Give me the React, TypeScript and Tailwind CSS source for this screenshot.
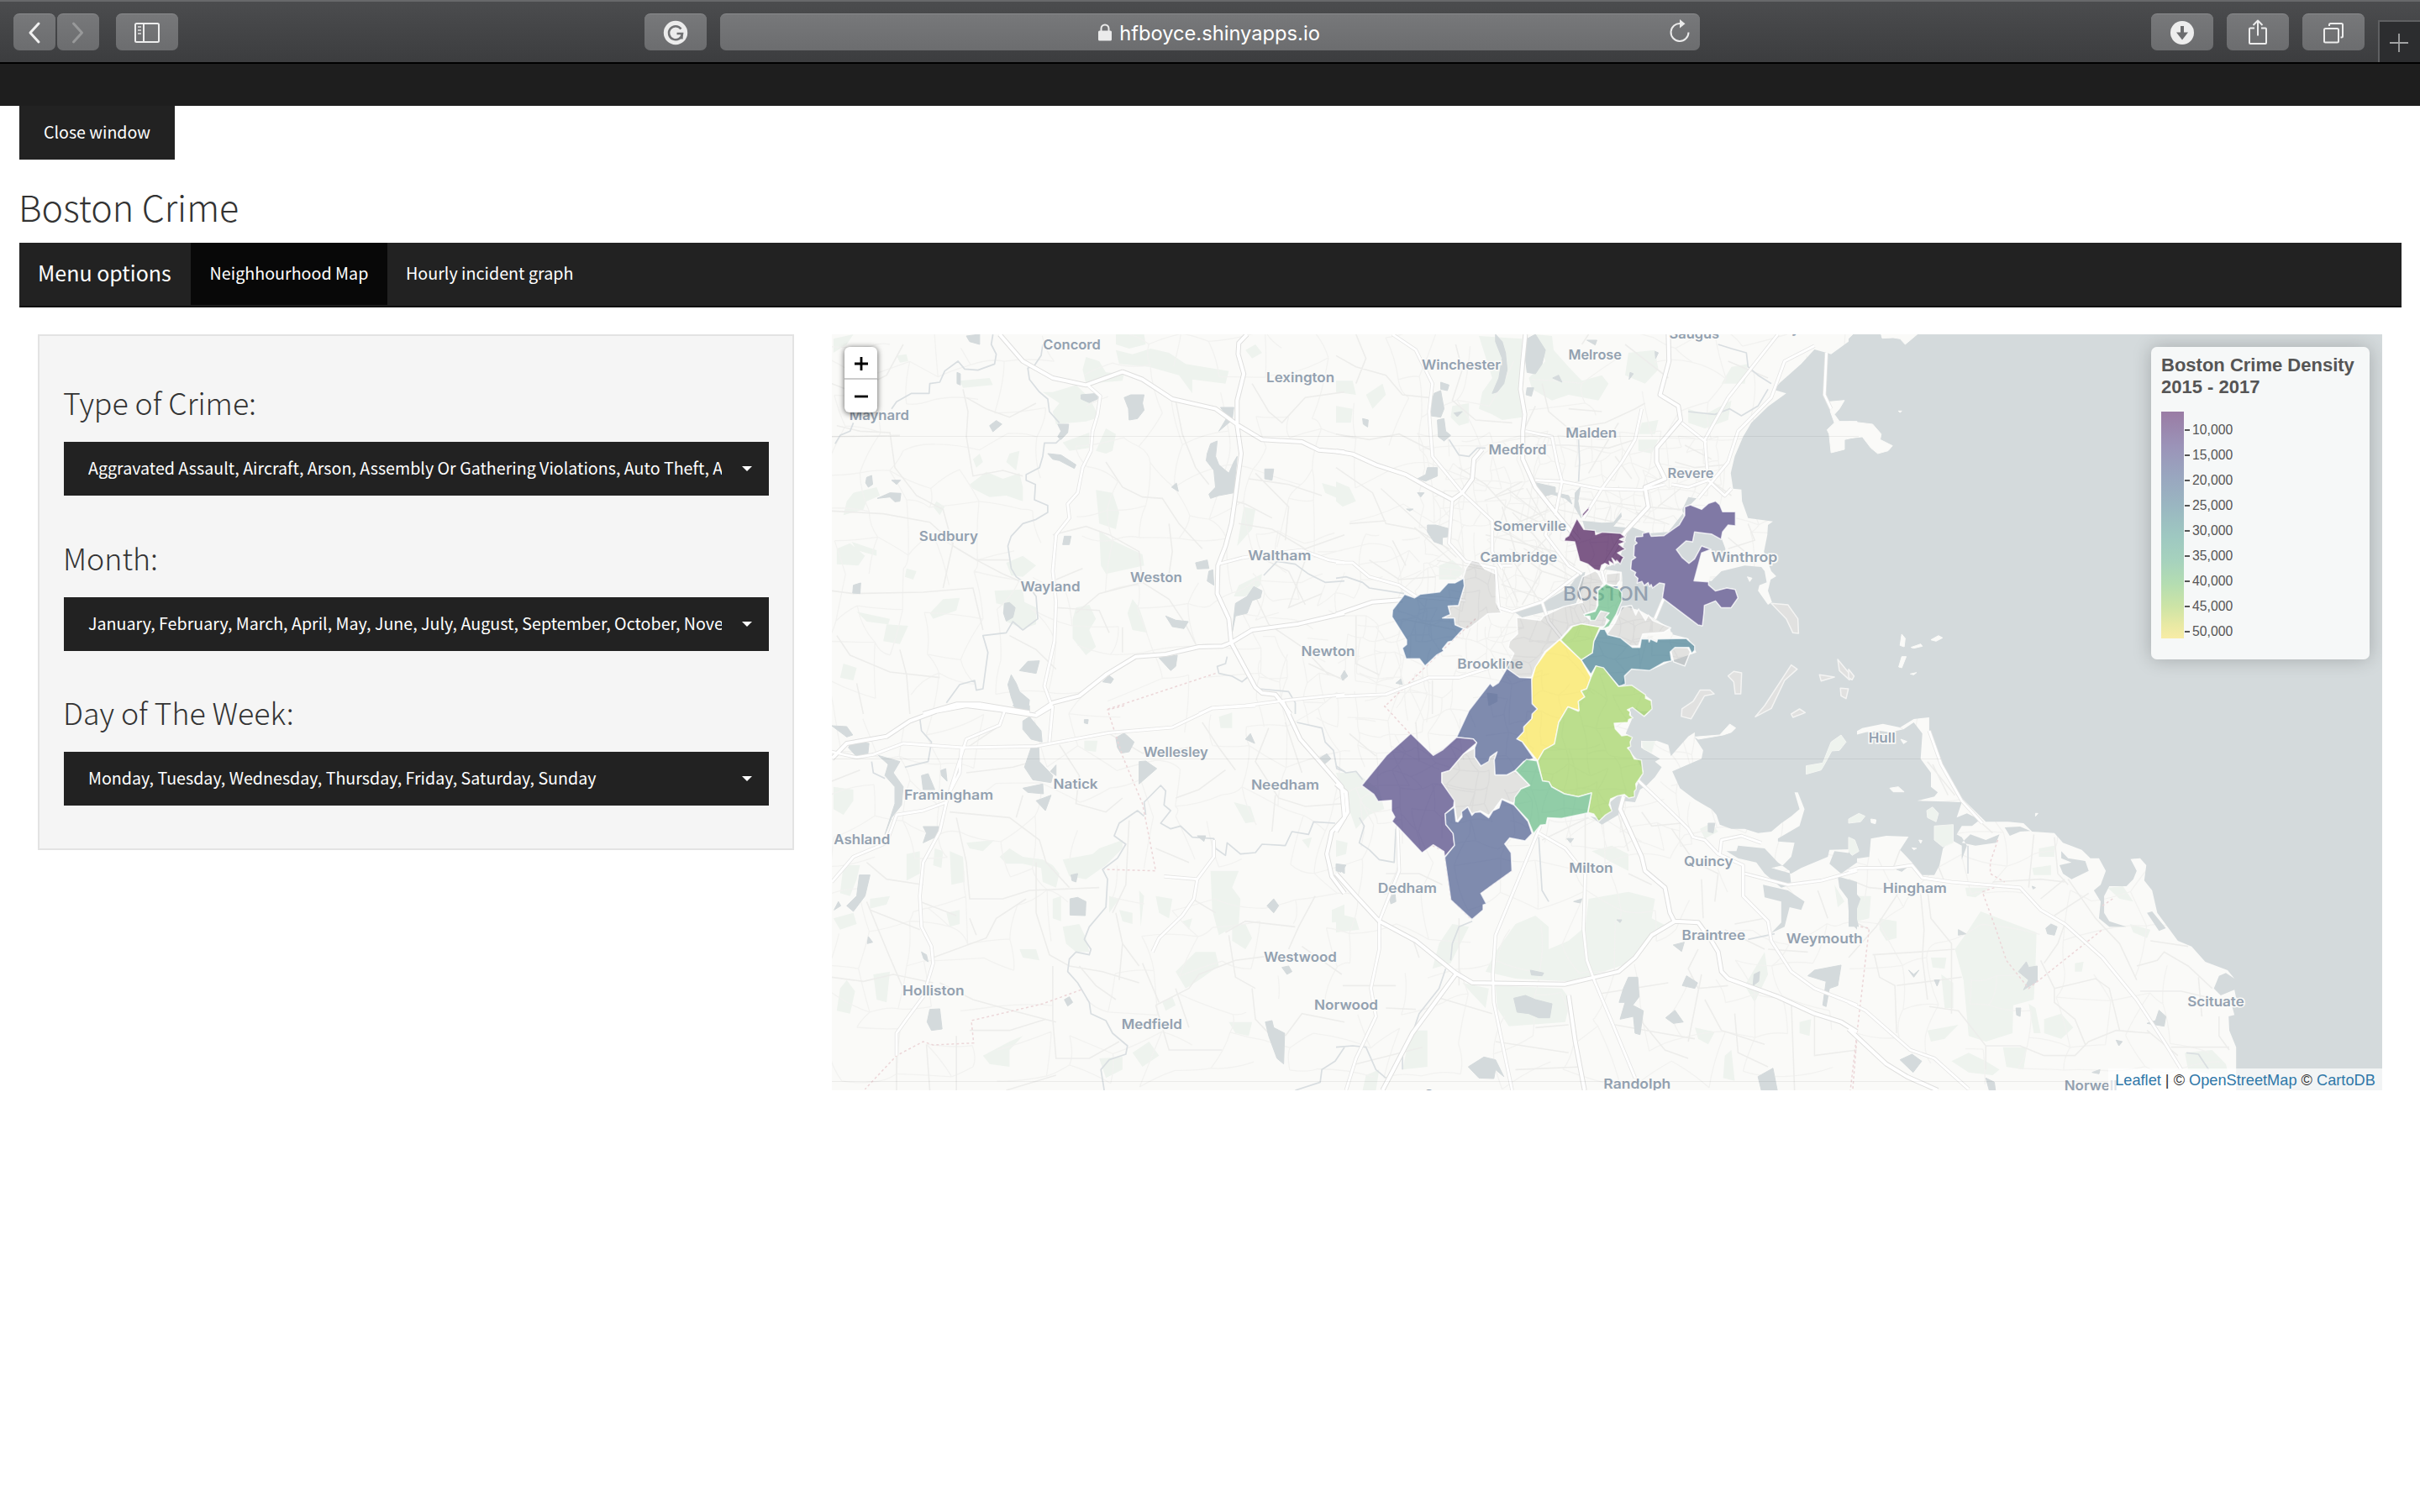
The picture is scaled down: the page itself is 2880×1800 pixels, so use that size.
import React from "react";

/* ------------------------------------------------------------------ */
/* Map data. The map is digitised in sheets, each with its own grid.   */
/* ------------------------------------------------------------------ */

type SheetId = "a" | "b" | "c" | "d" | "e" | "f" | "g";
type Layer = Partial<Record<SheetId, string>>;

const SHEETS: Record<SheetId, { x: number; y: number; sx: number; sy: number }> = {
  a: { x: 980, y: 390, sx: 0.39541, sy: 0.33333 },
  b: { x: 1590, y: 390, sx: 0.39541, sy: 0.33333 },
  c: { x: 1590, y: 840, sx: 0.39541, sy: 0.33333 },
  d: { x: 980, y: 840, sx: 0.39541, sy: 0.33333 },
  e: { x: 2200, y: 390, sx: 0.40816, sy: 0.33333 },
  f: { x: 2200, y: 840, sx: 0.40816, sy: 0.33333 },
  g: { x: 1600, y: 560, sx: 0.33333, sy: 0.35714 },
};

const PARKS: Layer = {
  a: "M790 105L830 120 850 160 905 165 900 190 790 200 780 150Z M880 80L930 95 985 75 1040 90 1090 130 1220 155 1210 200 1110 185 1110 235 1070 170 980 140 890 130Z M690 230L760 205 800 250 830 320 790 335 700 345 690 300 710 270 660 230Z M880 24L965 24 970 60 920 75 880 60Z M410 190L500 180 510 205 420 215Z M440 560L490 515 540 540 590 520 600 570 600 620 550 600 500 605 450 575Z M90 590L160 570 170 600 130 620 120 650 60 670 70 620Z M40 790L80 770 125 815 105 850 40 845Z M85 765L160 795 160 815 100 795Z M820 580L870 590 890 660 880 720 830 700 825 640Z M830 725L870 760 960 810 965 850 850 880 835 850Z M820 440L850 360 880 380 870 440 850 450Z M720 410L800 375 800 430 740 440Z M515 940L600 935 605 980 640 1000 640 1060 600 1075 550 1050 540 990 520 985Z M190 1060L255 1065 230 1130 180 1120Z M100 1015L200 1040 195 1060 130 1050Z M760 1000L800 990 820 1040 800 1080 820 1140 790 1170 750 1110 750 1040Z M930 970L950 1000 975 1090 930 1080 915 1020Z M1500 555L1560 575 1568 620 1510 590Z M1245 780L1265 640 1300 650 1290 720Z M550 840L600 815 640 850 600 890 565 885Z M360 970L410 965 400 1010 330 1040 320 1020Z M60 1200L100 1215 90 1260 50 1250Z M1235 960L1250 920 1320 880 1315 920 1270 960Z M30 40L90 24 70 60 30 90Z M220 100L250 95 255 120 230 125Z M1270 80L1300 60 1320 90 1290 110Z M450 470L470 450 480 480 460 500Z M560 450L590 440 580 510 550 480Z M340 620L365 640 350 670 330 640Z M250 860L280 870 270 900 245 890Z",
  b: "M430 30L560 40 555 150 560 320 500 330 470 310 430 290 440 230 470 180Z M600 24L650 30 655 80 700 140 740 190 800 170 820 200 790 260 700 240 650 260 590 220 580 180 630 120Z M880 90L960 80 970 150 930 200 870 170Z M0 190L50 190 60 240 0 230Z M0 280L50 290 45 340 0 340Z M90 240L140 200 150 240 110 290Z M350 280L400 270 400 340 370 350 345 320Z M1060 290L1110 310 1190 260 1180 330 1110 360 1060 340Z M920 340L970 330 960 380 910 380Z M1190 140L1240 130 1230 200 1160 200Z M310 850L350 830 390 870 360 900 310 900Z M0 550L40 570 60 620 20 640 0 620Z M910 400L970 400 950 450 910 440Z",
  c: "M760 690L880 665 960 690 950 760 1000 790 930 850 880 920 780 960 700 985 540 975 450 950 480 880 540 780 600 750 640 790 640 870 700 840 750 790Z M480 1000L680 1010 705 1050 690 1130 520 1145 485 1080Z M310 850L350 780 400 790 370 860 345 920 290 940Z M225 1160L275 1160 275 1290 200 1300Z M0 240L60 240 130 300 145 370 100 390 60 440 30 340Z M1095 440L1130 420 1150 450 1110 475Z M770 520L830 500 880 530 880 590 830 560Z M0 740L60 760 70 800 0 810Z M1230 1000L1290 880 1300 960 1260 1060Z M1395 1130L1430 1120 1425 1180 1395 1170Z M1170 1250L1190 1230 1200 1340 1165 1330Z M90 1320L130 1300 120 1374 80 1374Z M1080 1150L1140 1165 1120 1210 1090 1190Z M380 990L460 1010 450 1080 410 1030Z M0 480L35 490 30 530 0 540Z M1500 640L1530 700 1510 720Z",
  d: "M30 290L90 300 90 340 60 390 30 370Z M380 520L420 540 425 630 385 640Z M530 540L560 510 600 540 660 550 690 570 710 600 700 650 660 630 655 580 600 565 550 565Z M720 550L810 530 830 510 900 480 900 510 850 570 790 620 740 610Z M60 570L110 570 100 620 80 680 50 670Z M690 690L715 680 715 770 690 760Z M720 790L770 780 790 830 800 880 760 880 730 850Z M1165 590L1250 590 1230 650 1255 690 1250 780 1190 820 1170 730Z M1060 950L1120 880 1180 880 1190 930 1130 980 1090 1010Z M1235 345L1285 360 1300 415 1270 420Z M30 760L90 740 100 780 50 800Z M370 740L410 730 410 780 380 790Z M590 870L640 870 650 910 600 900Z M50 1010L70 980 95 1020 80 1100 40 1090Z M150 960L200 950 190 1060 160 1050Z M430 490L515 480 480 520 440 510Z M480 1250L560 1200 600 1180 560 1230 560 1290 500 1280Z M930 1240L980 1200 1010 1250 960 1290Z M830 1260L900 1255 900 1300 850 1330Z M1220 1130L1290 1130 1280 1180 1240 1170Z M785 125L825 125 820 165 785 160Z M1190 40L1230 25 1230 80 1195 80Z M860 680L890 690 860 740Z M890 730L930 740 930 780 900 770Z M950 660L965 680 955 790Z M1000 680L1050 690 1040 760 1010 740Z M1080 770L1110 760 1100 800Z M1230 790L1270 780 1290 830 1270 870 1230 840Z M250 530L290 520 290 600 250 625Z M335 510L360 520 355 580 330 570Z M140 690L200 680 190 710 140 725Z M1440 480L1470 470 1460 510Z M1530 730L1568 710 1568 770 1530 775Z M1020 1060L1050 1040 1060 1070 1030 1090Z",
  f: "M310 870L345 810 385 735 548 810 545 930 540 1050 480 1070 478 1170 400 1200 350 1180 335 980Z M300 1270L350 1240 400 1270 440 1300 420 1320 350 1310Z M570 1120L620 1100 655 1150 620 1190 570 1170Z M450 1220L520 1220 510 1300 460 1290Z M20 680L65 680 60 760 25 770Z M270 960L305 990 305 1080 280 1080Z M230 1160L320 1140 280 1190 240 1200Z M525 1065L545 1080 560 1170 540 1170Z M340 650L410 650 370 685 345 680Z M535 580L590 570 590 605 540 605Z M555 510L600 500 600 540 555 540Z M820 780L880 800 870 830 830 810Z M980 1240L1060 1230 1100 1280 1110 1330 990 1300Z M660 920L685 915 680 950 660 950Z M240 900L285 900 280 940 245 935Z M90 760L140 770 140 830 110 840 90 800Z M755 650L800 645 830 700 790 690Z",
};

const OCEAN: Layer = {
  b: "M1568 24L1545 48 1490 95 1476 90 1440 78 1400 130 1335 198 1318 222 1355 235 1300 282 1250 340 1225 390 1200 460 1188 520 1195 575 1220 578 1222 620 1240 680 1315 692 1300 705 1298 740 1288 800 1310 870 1325 888 1308 900 1300 940 1312 980 1300 990 1270 940 1274 920 1296 910 1290 870 1280 855 1230 850 1160 870 1130 905 1078 900 1125 802 1165 840 1172 790 1160 752 1080 700 1050 690 1042 650 1060 605 1085 610 1060 640 1000 730 940 735 890 712 860 742 800 735 750 725 742 690 800 697 835 695 858 660 860 675 835 710 880 715 870 760 850 840 800 862 860 872 862 910 860 950 845 1030 870 995 915 1010 960 1040 1005 1075 1010 1095 1060 1110 1085 1160 1010 1190 945 1225 890 1220 870 1245 855 1280 890 1278 950 1330 948 1365 925 1385 885 1358 885 1370 1568 1370Z M530 1010L625 980 700 930 730 880 750 872 740 930 722 985 640 1012 560 1035Z",
  c: "M880 0L945 0 950 15 928 40 905 10 885 8 890 50 872 100 890 115 880 160 905 190 925 235 912 270 890 330 865 325 850 320 825 345 830 370 800 405 765 395 800 425 850 390 860 340 900 345 915 300 935 285 960 255 980 220 960 200 975 190 918 150 918 125 945 130 965 125 1000 140 1008 180 1060 110 1080 95 1080 115 1105 160 1100 190 1050 215 1012 235 1035 295 1080 335 1130 370 1145 390 1155 425 1190 440 1230 440 1270 455 1310 450 1340 420 1370 395 1395 370 1380 310 1390 310 1410 370 1395 430 1330 475 1330 485 1380 490 1370 540 1345 570 1310 580 1370 600 1400 580 1480 540 1485 515 1568 512 1568 0Z M1175 520L1205 520 1210 500 1290 510 1330 560 1365 590 1370 640 1340 650 1290 600 1265 560 1210 545Z M1285 640L1360 660 1410 700 1400 730 1365 720 1350 790 1310 812 1340 775 1340 700 1290 685Z M1510 610L1568 630 1568 800 1545 770 1540 690 1515 650Z M1485 565L1500 520 1568 530 1568 560 1520 600Z",
  e: "M0 24H1568V1380H0Z",
  f: "M0 545L30 545 60 540 65 475 110 465 175 468 150 515 185 560 210 605 250 605 265 570 275 510 300 480 330 500 330 550 345 500 330 470 315 460 330 430 360 430 380 410 370 400 345 385 315 400 330 345 260 342 200 340 250 325 260 310 240 290 240 240 210 190 215 100 190 60 160 85 120 95 90 90 50 95 20 105 18 95 40 80 100 65 150 78 190 48 235 42 235 90 270 200 330 330 400 415 465 415 510 420 535 450 600 455 625 490 680 515 705 545 730 545 750 590 735 640 715 660 735 700 730 760 760 790 810 790 760 770 745 740 745 680 760 645 810 645 830 620 840 590 822 548 850 545 868 570 862 625 885 660 900 740 960 840 1000 860 1040 915 1105 945 1125 975 1100 955 1080 965 1065 1010 1085 1035 1125 1015 1130 1045 1115 1060 1125 1105 1108 1110 1110 1160 1130 1220 1130 1374 1568 1374 1568 -5 0 -5Z M455 435L500 432 530 448 500 450 470 465Z M620 520L640 545 690 555 700 590 650 620 625 600 615 570 650 560 620 545Z M355 460L400 480 440 460 430 490 370 500 330 490Z M870 740L885 735 925 795 905 805Z M0 680L25 675 35 690 20 740 30 790 0 790Z",
};

const EAST_BOSTON =
  "M1088 205L1095 220 1140 218 1195 182 1215 150 1215 122 1235 115 1275 130 1300 110 1325 102 1340 115 1350 138 1396 138 1396 185 1370 182 1350 205 1345 230 1310 212 1250 205 1243 238 1220 235 1185 264 1205 290 1230 310 1250 295 1275 252 1308 263 1275 275 1248 368 1300 372 1300 382 1325 402 1365 392 1395 397 1405 425 1380 458 1345 458 1325 435 1285 450 1283 478 1278 518 1262 515 1135 425 1143 378 1125 375 1100 392 1095 380 1090 388 1084 374 1070 384 1062 370 1045 375 1048 360 1036 350 1040 340 1022 330 1025 300 1040 290 1033 285 1035 250 1045 242 1038 235 1040 222 1065 220 1065 210Z";

const ISLANDS: Layer = {
  g: "M1305 732L1320 745 1285 752 1238 828 1203 820 1205 795 1245 770 1270 732Z M1370 685L1390 670 1418 675 1415 745 1395 745 1390 705Z",
  b: "M1370 1205L1388 1220 1350 1260 1310 1360 1262 1390 1290 1350Z M1310 985L1360 990 1390 1040 1392 1092 1375 1090 1355 1040Z M1510 1185L1555 1250 1545 1258 1515 1225Z M1455 1240L1500 1248 1460 1262Z M1518 1288L1542 1290 1535 1325 1520 1315Z",
  c: "M1370 30L1395 12 1412 25 1375 42Z",
  e: "M0 1220L16 1245 10 1258 0 1250Z",
};

const LAND: Layer = {
  b: "M1485 265L1530 260 1515 290 1500 310 1515 335 1568 335 1568 390 1530 400 1530 435 1490 447 1484 380 1478 365 1500 340 1488 300Z M1238 890L1252 895 1245 907Z",
  c: "M1080 112L1155 105 1185 66 1203 80 1190 95 1165 105 1090 120Z",
  e: "M95 24L200 24 165 60 150 40 130 36 98 38Z M0 335L70 345 95 380 92 400 128 422 115 440 85 450 65 430 40 390 0 395Z M155 1095L165 1110 162 1140 150 1135Z M240 1115L262 1100 274 1108 255 1120Z M182 1142L210 1130 215 1138 190 1145Z M155 1175L168 1175 155 1215 146 1212Z M180 1237L198 1232 190 1240Z M145 298L155 298 150 303Z M0 24L12 24 0 38Z",
  f: "M120 295L145 290 162 308 130 308Z M152 120L170 128 160 136Z M65 405L80 408 78 422 66 418Z M185 508L198 510 190 515Z M205 480L214 482 210 492Z M545 385L552 385 545 395Z",
  g: EAST_BOSTON + " M1275 275L1308 263 1312 300 1300 372 1248 368Z M1060 540L1140 538 1170 541 1170 549 1060 551Z",
};

const GREEN_ISLANDS: Layer = {
  c: "M1490 130L1520 105 1535 130 1515 160 1492 162 1470 210 1460 230 1415 245 1415 215 1465 205Z M920 128L960 128 950 168 925 155Z",
  f: "M0 405L30 385 48 395 35 415 0 420Z M228 375L245 362 262 385 255 415 230 400Z M250 430L305 425 305 490 275 505 250 480Z M0 470L18 480 30 520 10 535 0 520Z",
};

const LAKES: Layer = {
  a: "M905 250L925 240 965 240 960 270 965 295 945 325 920 330 918 290Z M775 240L825 235 825 255 800 268 775 255Z M705 345L738 345 735 375 715 400 705 390 715 370Z M500 350L520 332 537 345 510 372Z M675 450L715 455 760 490 755 503 710 475 690 470Z M1155 450L1165 415 1185 405 1180 460 1190 490 1220 520 1235 480 1245 460 1235 590 1190 600 1165 610 1160 595 1180 570 1175 510 1152 475Z M1195 285L1235 285 1230 330 1190 370 1215 320Z M1328 505L1355 505 1350 545 1328 540Z M130 535L145 528 148 560 135 570 127 555Z M205 545L232 545 220 560Z M162 610L200 590 233 592 230 620 215 622 200 605Z M545 985L560 982 577 1000 570 1035 550 1048 542 1020Z M1030 1030L1060 1045 1098 1050 1085 1075 1050 1068Z M1010 1180L1065 1170 1060 1210 1045 1225Z M840 1265L860 1243 873 1255 865 1270Z M590 1225L615 1192 650 1190 640 1235Z M565 1240L580 1270 590 1300 620 1330 615 1370 580 1370 565 1320 555 1275Z M1120 840L1155 830 1160 860 1125 862Z M1160 870L1172 865 1175 920 1155 905Z M90 920L112 912 110 950 88 948Z M430 30L470 24 470 60 440 50Z M725 745L745 745 740 775 720 775Z M1240 985L1275 960 1295 925 1320 940 1315 965 1290 975 1275 1020 1240 1030 1230 1090Z M1048 570L1062 555 1068 585Z M402 160L412 165 412 205 402 200Z",
  b: "M575 40L600 24 630 80 620 130 600 165 575 160 570 110Z M480 24L500 50 510 90 515 150 505 200 485 230 470 235 490 180 500 110 480 50Z M575 215L595 215 588 245 572 240Z M315 195L340 205 335 225 315 220Z M295 235L315 225 325 290 315 320 285 315 285 275Z M305 330L325 325 330 370 345 385 325 405 308 390Z M275 705L300 705 345 720 345 745 320 750 320 775 295 765 275 730Z M245 540L270 525 275 500 305 500 305 530 270 548Z M585 550L660 570 660 590 700 600 710 630 690 610 650 595 620 605Z M652 180L670 170 680 195Z M755 45L785 45 780 62Z M245 590L265 590 255 605Z M80 325L97 330 95 355 82 345Z M180 1270L195 1255 200 1275Z M15 1245L25 1225 35 1245 20 1260Z M355 305L380 300 365 318Z M212 648L232 648 222 655Z M960 85L970 90 962 110Z M885 160L895 165 882 185Z M720 590L735 570 728 620 738 680 718 640Z",
  c: "M535 1045L570 1035 600 1050 650 1065 643 1115 610 1115 580 1100 545 1095Z M880 970L908 970 912 1040 893 1070 925 1090 915 1175 900 1170 895 1110 855 1120 870 1060 852 1060 865 1010Z M398 1290L445 1255 480 1265 505 1325 480 1300 475 1332 430 1330Z M1055 965L1088 990 1080 1010 1042 1000Z M992 1115L1020 1088 1045 1130 1015 1135Z M1440 945L1520 927 1510 1000 1485 1010 1475 1075 1465 1070 1475 985 1420 965Z M1270 1325L1315 1295 1328 1374 1280 1374Z M1258 960L1275 950 1272 985 1255 1000Z M585 945L625 955 620 965 588 962Z M695 475L715 475 705 490Z M160 680L178 675 180 700 165 708Z M1015 855L1048 845 1040 878Z M0 565L30 570 15 595 0 590Z M845 765L860 765 855 775Z M1120 420L1140 420 1135 455 1120 450Z M715 700L740 690 735 705Z M455 -45L485 -40 485 -15 460 0Z",
  d: "M25 72L70 75 88 105 70 112Z M75 150L85 128 137 135 133 180 100 182Z M600 55L620 40 655 90 658 130 625 120 600 85Z M625 150L648 150 650 200 690 250 685 275 630 265 605 220Z M683 235L700 212 700 250Z M600 295L660 280 662 315 615 310Z M640 340L685 320 668 375Z M885 150L880 115 905 98 935 130 920 165 895 170Z M950 200L970 198 1003 225 950 280Z M295 250L315 243 335 300 300 300Z M353 232L368 225 372 270 355 250Z M300 432L347 432 345 465 300 490 310 455Z M165 178L230 200 210 240 240 290 235 355 205 400 185 460 215 350 215 290 185 250 195 210Z M742 690L765 685 790 700 788 750 742 748Z M108 605L140 605 125 680 90 735 70 715 100 680Z M32 730L45 700 52 715Z M725 1050L740 1040 750 1060 735 1073Z M320 1085L350 1083 357 1155 325 1160 312 1130Z M1330 1130L1350 1125 1355 1150 1388 1170 1385 1280 1365 1260 1340 1180Z M1380 935L1400 930 1410 950 1395 960Z M745 605L765 600 760 630 748 625Z M1335 715L1355 690 1370 715 1355 740Z M1490 190L1515 172 1527 190 1505 212Z M1270 120L1285 100 1298 135Z M135 825L148 845 132 850Z M785 50L797 50 795 65 785 62Z M295 880L310 890 315 915 302 905Z M1125 465L1150 465 1145 485Z M1545 580L1568 575 1568 600Z M570 0L620 0 620 25 590 15Z",
  f: "M495 950L518 915 525 935 550 930 550 985 510 1015 525 980Z M575 795L590 780 608 790 600 820 580 815Z M870 1135L895 1125 905 1088 925 1110 920 1145 895 1140Z M150 1265L185 1245 213 1270 188 1310Z M488 1080L502 1080 500 1110 490 1105Z M320 800L342 815 320 820Z M780 1195L798 1200 788 1215Z M175 945L190 960 205 945 190 970Z M250 980L265 980 258 1002Z M710 1310L733 1300 730 1315Z M400 1330L425 1345 428 1374 410 1374Z M535 645L545 650 538 655Z M630 570L645 590 665 590 655 610 635 600Z M140 585L180 568 155 592Z",
};

const RIVERS: Layer = {
  a: "M510 24L505 60 520 95 515 130 465 152 425 148 405 120 365 155 350 195 320 200 318 235 265 235 220 265 205 290 M90 340L80 370 50 385 35 415 M660 60L655 100 635 135 615 145 620 185 650 230 675 255 680 300 710 340 M715 395L700 412 665 412 660 460 650 500 610 525 610 545 638 560 635 615 675 635 675 660 640 685 600 700 565 745 555 780 565 860 580 890 615 920 640 960 645 1040 600 1080 570 1050 550 1090 480 1100 495 1160 480 1290 460 1295 455 1260 410 1275 370 1340 M1568 905L1510 910 1460 880 1420 845 1365 835 1325 885 M1215 1175L1210 1200 1185 1210 1190 1235 1230 1245 1260 1265 1280 1245 M1310 1290L1400 1300 1420 1340 1420 1380",
  b: "M1150 60L1190 75 1235 90 1240 140 1270 170 1310 200 M1300 220L1270 280 1220 315 1185 290 1140 310 1060 300 M730 400L733 480 730 550 M340 400L370 455 400 460 425 430 450 430 M0 895L30 890 80 910 100 930 205 950",
  c: "M70 400L85 430 70 490 100 515 130 550 175 560 180 440 M410 770L370 790 350 850 345 910 M330 940L310 1010 250 1100 230 1170 200 1230 200 1300 M0 1220L50 1215 90 1220 120 1300 150 1330 M0 215L30 240 60 235 80 265 M610 470L620 660 640 700 M1240 835L1320 815",
  d: "M290 45L295 90 325 130 315 200 245 220 M145 200L150 240 185 260 M970 390L965 345 1015 285 1030 305 1025 355 1045 375 1015 420 1045 440 1075 430 1110 470 1175 475 1180 510 1210 535 1215 490 1255 530 1300 525 1320 495 1390 500 1410 450 1460 460 1475 415 1540 420 M965 395L945 375 890 420 875 465 910 495 885 545 840 585 855 620 850 720 800 790 785 835 805 870 800 890 760 880 740 905 735 950 765 990 800 1060 805 1100 850 1125 870 1170 915 1215 910 1245 860 1265 835 1300 845 1374 M1425 60L1500 80 1510 130 1535 160 1545 225 1568 235 M1420 1374L1495 1345 1500 1300 1540 1270 1568 1220",
  f: "M348 500L348 600 M985 1240L1020 1245 1050 1300",
};

const MINOR: Layer = {
  a: "M25 200L90 230 190 170 240 60 M40 350L110 370 200 375 215 500 280 600 360 650 390 780 460 830 560 830 M25 655L180 665 320 695 390 770 360 930 M420 220L435 300 430 390 450 530 540 510 600 530 M25 390L230 385 M640 270L560 320 490 290 430 250 M850 480L900 570 960 605 1020 610 1070 700 1140 790 M1060 260L1080 380 1120 500 1160 560 M690 740L790 710 860 740 950 800 960 910 830 950 760 1020 M960 910L1040 970 1090 1060 1120 1130 M25 940L90 950 300 945 450 930 480 1080 M460 830L540 880 620 920 M230 1150L250 1240 260 1380 M40 1100L80 1170 200 1230 350 1250 M700 1000L830 1010 860 1090 M1500 600L1400 560 1280 540 M1290 200L1340 300 1380 340 1450 250 1568 230 M1250 700L1350 720 1450 790 1568 740 M1300 520L1400 640 1390 760 M1330 830L1400 870 1450 990 M1450 830L1400 1000 1500 950 M1240 620L1270 630 1350 680 M780 860L700 900 M1300 960L1340 1060 1440 1140 1520 1240 M1568 1260L1460 1200 M1040 700L1050 800 1040 880 M560 1100L640 1150 700 1220 M100 1270L120 1380 M900 1070L900 1160",
  b: "M0 100L60 140 150 170 200 240 280 250 M60 24L90 110 60 200 M360 60L380 150 350 260 420 330 530 340 M620 200L640 300 700 360 810 340 900 290 930 270 M0 380L100 400 190 380 290 440 M0 500L110 590 150 700 240 720 340 790 M600 420L700 420 820 430 900 400 M840 460L890 540 M370 500L450 560 510 640 620 700 M480 600L560 550 M500 640L540 800 620 870 700 900 M540 700L640 650 M560 770L660 800 720 850 M450 740L560 770 M620 870L560 990 M1020 480L1080 500 1170 490 M1050 420L1130 470 M1040 560L1080 570 1120 540 1190 600 M1240 700L1260 760 1180 790 M1180 750L1260 830 M100 830L190 900 300 890 M170 760L210 850 M200 1040L360 1080 M60 1030L60 1200 130 1240 M290 1260L290 1380 M850 340L800 440 760 520 M1180 120L1300 180 M870 60L1000 180 M760 24L740 60 M600 280L560 380 M700 290L800 300 M930 640L1040 650 M40 700L150 690",
  c: "M40 100L120 180 M240 60L250 200 M230 830L250 900 M750 385L750 600 M620 480L760 400 M150 600L250 600 320 640 M370 760L370 1000 M20 1000L180 1000 M150 1080L240 1085 M850 390L880 520 M920 380L950 430 1040 420 M880 600L950 640 M1100 620L1105 760 M1010 440L1080 560 1150 600 1140 700 M1290 760L1200 780 M1170 800L1290 870 M1090 870L1060 940 1090 1010 1180 1000 M1110 1050L1160 1160 1290 1210 M900 1100L990 1230 1060 1260 M840 1140L980 1170 1080 1190 M790 1030L1000 990 M1370 1050L1380 1374 M1200 1100L1210 1240 1300 1290 M1440 1110L1440 1250 1568 1230 M300 1040L470 1100 M480 1200L700 1240 M540 1300L740 1290 M60 1280L260 1220 M1100 960L1060 1200 M600 1150L700 1140 M1300 870L1420 880 M1450 660L1480 760",
  d: "M25 270L110 230 M430 240L570 220 630 200 M420 160L520 80 M860 100L960 170 1100 150 M1140 60L1190 150 1240 230 M710 140L770 250 760 350 850 380 900 330 M380 380L560 400 650 480 670 560 740 650 M580 400L600 320 M400 400L430 560 440 690 540 690 620 660 830 650 M130 560L190 620 300 640 M140 730L290 800 M130 700L200 900 240 1010 M290 700L400 750 M330 900L490 830 520 760 610 690 M640 560L640 740 680 890 740 930 840 950 950 990 M440 760L460 820 M25 970L120 985 210 960 330 990 M690 930L690 1120 700 1260 800 1260 890 1200 M350 990L450 1050 570 1090 700 1130 M440 1160L560 1160 670 1120 M220 1250L220 1374 M310 1210L320 1374 M400 1180L400 1374 M550 1374L700 1320 M1000 1070L1100 1010 1130 960 1240 910 1370 890 M1000 1070L1040 1230 1200 1230 M960 920L1010 1060 M880 740L900 850 950 930 M890 980L900 850 M770 930L820 1000 880 1050 M1210 810L1270 770 1420 790 M1220 820L1240 970 1300 1010 M1290 1010L1300 1120 1380 1220 M1210 230L1130 300 1060 330 M1340 80L1300 200 1370 330 1450 360 1568 350 M1390 60L1440 240 M1360 320L1350 450 M1000 510L1100 560 M920 410L910 640 870 740 M1440 860L1560 960 M1400 870L1430 790 1480 680 M1060 1010L1100 1150 M1180 740L1110 690 M1568 1130L1440 1100 1390 1180",
  f: "M0 620L60 650 150 660 200 640 M150 515L130 580 M230 660L240 760 300 850 300 1100 M210 670L220 800 215 900 230 1050 M150 660L80 790 0 900 M70 890L200 880 310 870 M75 890L90 970 135 1000 140 1170 M140 1000L330 970 M235 1075L320 1090 400 1215 400 1300 M400 1215L500 1215 570 1250 660 1250 700 1200 780 1160 880 1170 M600 1010L720 975 760 1010 790 1160 M560 910L600 1010 600 1060 660 1120 690 1210 M630 620L560 690 M640 620L720 760 790 850 840 980 M630 780L610 850 570 920 M700 670L600 750 M840 930L900 910 920 880 990 930 1060 1010 M850 1020L970 1020 1110 1060 M1020 970L1030 1110 M870 1160L960 1250 M540 460L525 650 M600 470L610 600 640 640 M420 630L560 620 630 630 M880 840L990 860 M0 760L60 800 M230 200L310 320 M245 210L290 320 M370 400L420 455 M940 1220L1110 1220 M1080 1110L1080 1180 1110 1230 M280 630L260 570",
};

const ROADS: Layer = {
  a: "M795 205L833 245 825 310 810 370 805 440 780 500 765 590 735 630 740 680 700 740 690 870 700 980 695 1120 665 1280 685 1345 M1187 845L1260 822 1330 810 1440 795 1520 830 1568 840 M1130 1380L1170 1358 1270 1350 1400 1330 1568 1310",
  b: "M1440 65L1350 120 1310 250 1210 370 1180 480 1090 610 M1330 24L1180 250 1110 400 1120 550 M600 545L680 550 790 575 920 580 990 560 M1040 340L1115 410 M170 24L240 80 290 200 280 300 290 460 380 590 470 690 470 800 500 860 M350 615L340 770 390 835 480 860 490 1000 530 1015 620 980 730 880 M0 1318L150 1310 280 1250 370 1250 500 1200 M985 970L960 1040 M570 370L650 390 665 480 680 550 660 670 M920 290L900 400 860 480 800 575 745 680 M1476 90L1470 240 1490 290 M620 980L640 1050 680 1110 M640 700L630 740 700 850 740 880 M800 870L810 920 M1010 560L1060 570 1120 545 1170 600 1190 575 M0 840L50 840 100 890 190 920 240 960 390 975 M740 990L760 1040 M530 850L500 850",
  c: "M615 430L480 820 472 960 475 1060 530 1374 M610 455L690 510 750 600 745 800 755 910 780 990 830 1130 900 1330 M910 268L1000 370 1060 440 1075 470 1110 480 1150 530 1225 570 1225 680 1300 770 1310 840 1370 950 1440 1010 1568 1070 M1230 600L1360 640 1460 625 1568 590 M185 430L190 590 130 770 130 870 105 1010 120 1110 60 1260 30 1374 M1155 530L1160 480 1220 465 1280 490",
  d: "M25 165L100 185 150 175 240 135 420 150 640 145 860 97 1050 78 1170 10 1300 0 M690 0L680 130 M25 630L90 540 190 490 220 390 300 375 370 345 430 120 530 70 545 20 M370 345L350 450 300 560 290 680 295 790 325 860 330 920 300 1040 250 1120 220 1170 220 1250 M1025 610L1125 620 1175 540 1175 480 M1125 620L1115 690 1080 750 1010 830 990 880 M370 330L410 240 415 150",
  f: "M0 590L30 580 130 580 185 570 215 615 300 630 500 650 560 730 630 780 740 900 840 1050 920 1200 970 1300 M0 1060L50 1090 180 1230 250 1260 350 1370 M235 90L270 210 330 340 390 420",
};

const HIGHWAYS: Layer = {
  a: "M1275 24L1250 55 1248 95 1265 165 1245 260 1245 350 1257 450 1240 600 1228 700 1210 780 1187 850 1185 950 1220 1040 1227 1125 1300 1285 1320 1305 1360 1310 1380 1340 1405 1380 M530 24L600 120 690 180 790 205 900 158 960 185 1050 255 1180 290 1250 350 1320 400 1440 408 1490 437 1568 445 M300 1380L400 1345 470 1345 620 1375 M640 1380L690 1340 770 1315 850 1240 940 1175 1030 1167 1130 1140 1200 1138 1227 1125 1290 1080 1430 1058 1568 1020",
  b: "M0 442L50 452 120 490 210 525 270 565 350 615 380 590 410 540 415 470 440 435 M570 24L562 120 555 220 568 310 562 370 562 470 600 570 660 660 730 760 M1000 24L1002 120 975 240 1030 280 1037 330 965 430 965 480 990 540 930 570 940 640 870 730 800 865 M0 1025L110 980 200 972",
  c: "M0 600L60 680 130 770 240 840 360 955 410 990 690 995 850 950 900 900 950 820 1020 770 1090 775 1130 840 1150 880 1160 950 1180 975 1330 1040 1440 1100 1520 1130 1568 1165 M865 325L855 370 920 540 930 590 990 650 1005 740 1020 775 M0 280L30 310 35 380 0 450 M360 960L230 1170 140 1374 M700 1035L720 1200 748 1374",
  d: "M25 190L70 135 190 110 260 55 340 20 430 0 530 15 640 35 690 0 M1380 -20L1435 120 1560 290 1568 400 1530 450 1515 530 1530 610 1568 670",
  f: "M0 1155L110 1280 170 1325 260 1374",
};

const BORDERS: Layer = {
  a: "M1180 1235L850 1365",
  b: "M420 1040L340 1130 145 1355",
  c: "M145 0L222 100 M290 500L325 520 345 690 408 765 M440 665L530 590 M1568 1180L1555 1374",
  d: "M905 0L855 15 900 180 960 350 1000 590 845 585 M775 1015L660 1065 445 1125 452 1205 330 1212 300 1200 220 1250 125 1370",
  f: "M435 480L413 560 413 600 455 630 M425 650L390 665 430 800 460 910 525 1010 740 800 M770 690L740 715 M35 790L60 795 5 1374",
};

const CITY_GRID: Layer = {
  g: "M130 60L400 290 M330 300L500 330 M250 190L380 300 M560 200L820 330 M600 140L760 300 M620 320L740 210 M580 60L700 150 M650 60L740 210 M540 280L620 440 M600 300L700 440 M640 260L840 370 M560 380L740 440 M500 100L640 60 M1120 120L1200 60 M1040 140L1160 180 M760 130L1000 180 M800 90L1060 120 M930 170L950 120",
};

type District = { fill: string; d: string };

const DISTRICTS: District[] = [
  { fill: "#471557", d: "M830 160L855 197 895 200 897 214 920 206 985 210 1003 222 982 230 1003 238 980 246 1002 262 975 275 998 290 992 296 985 312 972 300 970 306 955 292 965 315 945 303 948 318 930 310 918 316 912 335 892 330 868 312 840 302 822 238 785 235 788 225 800 218Z M875 120L872 132 848 157 850 145Z" },
  { fill: "#4c4281", d: EAST_BOSTON },
  { fill: "#466995", d: "M425 360L428 385 407 450 370 452 378 480 350 492 392 492 395 515 425 527 385 568 370 572 350 595 355 602 330 615 288 652 268 628 220 628 207 592 222 580 222 565 170 488 172 465 215 413 250 425 270 413 340 405 370 375 395 375Z" },
  { fill: "#64b985", d: "M935 378L965 392 980 395 990 408 990 435 970 480 945 520 920 530 945 500 930 490 945 475 915 468 895 500 878 500 876 486 858 486 857 480 895 470 905 450 905 400Z" },
  { fill: "#437c92", d: "M912 530L930 530 940 548 985 558 1028 590 1055 590 1060 562 1086 562 1088 572 1092 562 1115 572 1118 562 1220 560 1250 585 1250 600 1240 610 1230 590 1180 590 1163 605 1168 635 1140 640 1090 667 1025 662 1000 685 1003 712 980 720 925 660 898 652 880 680 845 632 885 608 890 570Z" },
  { fill: "#a0d260", d: "M845 512L912 522 890 570 885 608 845 632 772 565 815 520Z" },
  { fill: "#f9e656", d: "M768 565L845 632 880 690 865 728 845 735 858 755 835 770 838 800 798 788 765 840 750 912 712 932 690 968 635 905 615 895 640 870 640 855 670 825 670 810 688 795 670 778 668 700 682 655 720 605Z" },
  { fill: "#a0d260", d: "M898 652L925 658 978 720 1025 716 1075 748 1075 760 1095 768 1098 795 1070 820 1028 790 1010 798 1020 805 1018 815 1030 825 1015 830 1012 840 963 843 967 862 990 885 1010 882 1028 890 1020 905 1022 920 1010 925 1020 935 1035 962 1060 965 1066 1010 1040 1045 1042 1062 1035 1070 1035 1088 1015 1092 1000 1080 975 1085 950 1095 945 1115 955 1135 930 1150 908 1170 890 1145 870 1140 882 1075 835 1088 785 1078 740 1055 730 1038 707 1035 690 968 712 932 750 912 765 840 798 788 835 803 838 800 835 770 858 755 845 735 865 728 880 690Z" },
  { fill: "#4a5b8e", d: "M580 660L625 690 668 692 670 778 688 795 670 812 668 828 640 855 640 870 615 895 635 905 676 960 640 970 610 1000 580 1015 538 1015 535 965 545 938 520 955 515 970 487 985 465 955 465 925 472 908 460 895 400 890 445 800 520 710 530 720 550 708Z" },
  { fill: "#64b985", d: "M650 963L687 968 707 1035 730 1038 740 1055 785 1078 835 1088 882 1075 868 1142 775 1160 725 1158 720 1180 700 1182 675 1210 655 1165 605 1115 608 1090 630 1062 662 1050 610 1000Z" },
  { fill: "#4c4281", d: "M237 877L317 950 350 932 400 890 460 895 472 908 425 945 375 1000 347 1008 347 1040 392 1100 390 1120 360 1145 362 1180 388 1210 393 1250 358 1288 355 1270 317 1248 277 1275 192 1190 170 1170 180 1155 168 1135 168 1100 120 1103 105 1080 62 1050 150 950Z" },
  { fill: "#4a5b8e", d: "M562 1097L605 1115 655 1170 670 1210 645 1235 590 1225 572 1245 595 1275 598 1335 487 1410 507 1445 495 1448 495 1465 455 1497 380 1432 358 1290 393 1250 388 1210 362 1180 360 1145 392 1122 398 1170 405 1172 420 1155 418 1138 440 1122 455 1150 465 1140 485 1138 515 1158 530 1135 552 1125Z" },
];

const UNRATED: Layer = {
  g: "M455 300L480 305 500 328 540 345 542 440 560 475 512 478 440 530 425 527 395 515 392 492 350 492 378 480 370 452 407 450 428 385 425 355 435 325Z M615 490L700 500 712 485 780 455 850 440 835 395 850 355 895 335 905 342 925 378 905 400 900 465 855 480 880 500 915 470 945 470 930 520 912 522 850 512 810 520 770 562 715 605 680 660 668 690 620 690 580 660 605 610 585 590 590 570 618 545Z M935 345L985 340 985 365 970 385 935 378Z M990 455L1025 450 1040 482 1050 462 1075 500 1085 482 1100 500 1165 525 1140 540 1065 545 1050 585 1020 585 980 558 935 548 965 510 980 480Z M465 925L465 955 487 985 520 955 545 938 535 965 538 1015 580 1015 610 1000 662 1050 630 1062 605 1110 562 1095 530 1135 515 1150 485 1135 455 1145 440 1122 402 1170 395 1130 392 1105 347 1040 347 1008 375 1000 425 945Z M1165 600L1180 588 1225 590 1235 605 1215 652 1175 638Z",
};

type Place = { s: SheetId; name: string; x: number; y: number; w: number };

/* w is the drawn length of the name in page pixels. */
const PLACES: Place[] = [
  { s: "a", name: "Concord", x: 661, y: 79, w: 68.5 },
  { s: "a", name: "Lexington", x: 1333, y: 196, w: 81 },
  { s: "a", name: "Maynard", x: 78, y: 331, w: 71 },
  { s: "a", name: "Sudbury", x: 288, y: 763, w: 70 },
  { s: "a", name: "Waltham", x: 1278, y: 830, w: 75 },
  { s: "a", name: "Weston", x: 923, y: 908, w: 62 },
  { s: "a", name: "Wayland", x: 593, y: 942, w: 71 },
  { s: "a", name: "Newton", x: 1438, y: 1173, w: 64 },
  { s: "b", name: "Winchester", x: 258, y: 151, w: 94 },
  { s: "b", name: "Melrose", x: 699, y: 113, w: 63.5 },
  { s: "b", name: "Saugus", x: 1003, y: 40, w: 59.5 },
  { s: "b", name: "Lynn", x: 1350, y: 18, w: 38 },
  { s: "b", name: "Malden", x: 691, y: 393, w: 61 },
  { s: "b", name: "Medford", x: 459, y: 452, w: 69 },
  { s: "b", name: "Revere", x: 998, y: 538, w: 55 },
  { s: "b", name: "Somerville", x: 473, y: 727, w: 87 },
  { s: "b", name: "Cambridge", x: 433, y: 837, w: 92 },
  { s: "b", name: "Winthrop", x: 1129, y: 837, w: 79 },
  { s: "b", name: "Brookline", x: 365, y: 1219, w: 78.5 },
  { s: "c", name: "Milton", x: 701, y: 598, w: 52.5 },
  { s: "c", name: "Quincy", x: 1047, y: 573, w: 58.5 },
  { s: "c", name: "Dedham", x: 126, y: 668, w: 70 },
  { s: "c", name: "Braintree", x: 1041, y: 838, w: 75.5 },
  { s: "c", name: "Weymouth", x: 1355, y: 850, w: 91 },
  { s: "c", name: "Randolph", x: 805, y: 1369, w: 80 },
  { s: "c", name: "Canton", x: 263, y: 1407, w: 58 },
  { s: "d", name: "Norwood", x: 1477, y: 1086, w: 76 },
  { s: "d", name: "Wellesley", x: 963, y: 184, w: 77 },
  { s: "d", name: "Natick", x: 692, y: 296, w: 53 },
  { s: "d", name: "Needham", x: 1287, y: 300, w: 81 },
  { s: "d", name: "Framingham", x: 243, y: 337, w: 106 },
  { s: "d", name: "Ashland", x: 31, y: 496, w: 67 },
  { s: "d", name: "Westwood", x: 1325, y: 915, w: 87 },
  { s: "d", name: "Holliston", x: 238, y: 1036, w: 73.5 },
  { s: "d", name: "Medfield", x: 897, y: 1156, w: 72 },
  { s: "f", name: "Hull", x: 58, y: 132, w: 32 },
  { s: "f", name: "Hingham", x: 100, y: 668, w: 76 },
  { s: "f", name: "Scituate", x: 988, y: 1074, w: 67.5 },
  { s: "f", name: "Norwell", x: 629, y: 1374, w: 63 },
];

/* Local streets: a jittered lattice, denser around the city centre. */
function streetMesh(x0: number, y0: number, x1: number, y1: number, step: number, keep: number, seed: number): string {
  let s = seed;
  const rnd = () => {
    s = (s * 1664525 + 1013904223) % 4294967296;
    return s / 4294967296;
  };
  const cols = Math.floor((x1 - x0) / step) + 1;
  const rows = Math.floor((y1 - y0) / step) + 1;
  const pts: number[][][] = [];
  for (let r = 0; r < rows; r++) {
    pts.push([]);
    for (let c = 0; c < cols; c++) {
      pts[r].push([x0 + c * step + (rnd() - 0.5) * step * 0.8, y0 + r * step + (rnd() - 0.5) * step * 0.8]);
    }
  }
  let d = "";
  const link = (p: number[], q: number[]) => {
    const mx = (p[0] + q[0]) / 2 + (rnd() - 0.5) * step * 0.3;
    const my = (p[1] + q[1]) / 2 + (rnd() - 0.5) * step * 0.3;
    d += `M${p[0].toFixed(1)} ${p[1].toFixed(1)}Q${mx.toFixed(1)} ${my.toFixed(1)} ${q[0].toFixed(1)} ${q[1].toFixed(1)}`;
  };
  for (let r = 0; r < rows; r++) {
    for (let c = 0; c < cols; c++) {
      if (c + 1 < cols && rnd() < keep) link(pts[r][c], pts[r][c + 1]);
      if (r + 1 < rows && rnd() < keep) link(pts[r][c], pts[r + 1][c]);
    }
  }
  return d;
}

const STREETS =
  streetMesh(990, 398, 2640, 1300, 42, 0.55, 7) +
  streetMesh(1690, 520, 2050, 760, 17, 0.7, 21) +
  streetMesh(1620, 740, 2020, 1010, 22, 0.6, 5) +
  streetMesh(1500, 640, 1700, 860, 24, 0.55, 11);

function MapLayer({ data, className }: { data: Layer; className: string }) {
  return (
    <g className={className}>
      {(Object.keys(data) as SheetId[]).map((id) => {
        const t = SHEETS[id];
        return (
          <path
            key={id}
            d={data[id]}
            transform={`translate(${t.x} ${t.y}) scale(${t.sx} ${t.sy})`}
            className="[vector-effect:non-scaling-stroke]"
          />
        );
      })}
    </g>
  );
}

function BostonMap() {
  const city = SHEETS.g;
  return (
    <svg viewBox="990 398 1845 900" className="block h-[900px] w-[1845px]">
      <rect x="990" y="398" width="1845" height="900" fill="#fafaf8" />
      <MapLayer data={PARKS} className="fill-[#eef3ee]" />
      <path d={STREETS} fill="none" stroke="#f2f2f0" strokeWidth="1.3" />
      <MapLayer data={MINOR} className="fill-none stroke-[#ededeb] stroke-[1.6px]" />
      <MapLayer data={CITY_GRID} className="fill-none stroke-[#ededeb] stroke-[1.4px]" />
      <MapLayer data={RIVERS} className="fill-none stroke-[#d9dee1] stroke-[1.7px] [stroke-linejoin:round]" />
      <MapLayer data={LAKES} className="fill-[#d4dadc] stroke-[#d4dadc] stroke-[1px] [stroke-linejoin:round]" />
      <MapLayer data={OCEAN} className="fill-[#d4dadc]" />
      <MapLayer data={LAND} className="fill-[#fafaf8] stroke-[#fafaf8] stroke-[1px]" />
      <MapLayer data={ISLANDS} className="fill-[#e1e1e0] stroke-[#f4f4f3] stroke-[1.5px] [stroke-linejoin:round]" />
      <MapLayer data={GREEN_ISLANDS} className="fill-[#eef3ee] stroke-[#f4f6f3] stroke-[1px]" />
      <MapLayer data={BORDERS} className="fill-none stroke-[#ecd6d8] stroke-[1.5px] [stroke-dasharray:3_3]" />
      <MapLayer data={ROADS} className="fill-none stroke-[#e6e6e5] stroke-[4.5px] [stroke-linejoin:round]" />
      <MapLayer data={HIGHWAYS} className="fill-none stroke-[#dfdfde] stroke-[6px] [stroke-linejoin:round]" />
      <MapLayer data={ROADS} className="fill-none stroke-white stroke-[2.8px] [stroke-linejoin:round]" />
      <MapLayer data={HIGHWAYS} className="fill-none stroke-white stroke-[4px] [stroke-linejoin:round]" />

      <g className="fill-[#93a1b0] font-['Inter',sans-serif] text-[16px] font-semibold stroke-[#fafaf8] stroke-[3px] [paint-order:stroke]">
        {PLACES.map((p) => {
          const t = SHEETS[p.s];
          return (
            <text key={p.name} x={t.x + p.x * t.sx} y={t.y + p.y * t.sy} textLength={p.w} lengthAdjust="spacingAndGlyphs">
              {p.name}
            </text>
          );
        })}
      </g>
      <text
        x="1860"
        y="715"
        textLength="102"
        lengthAdjust="spacingAndGlyphs"
        className="fill-[#93a1b0] font-['Inter',sans-serif] text-[22.5px] font-medium"
      >
        BOSTON
      </text>

      <g stroke="#000000" strokeOpacity="0.06">
        <path d="M990 519.5H2212M990 903.5H2310M990 1287.5H2660" />
      </g>

      <MapLayer data={UNRATED} className="fill-[#808080]/20 stroke-white/80 stroke-[1.5px] [stroke-linejoin:round]" />
      <g transform={`translate(${city.x} ${city.y}) scale(${city.sx} ${city.sy})`}>
        {DISTRICTS.map((z, i) => (
          <path
            key={i}
            d={z.d}
            fill={z.fill}
            fillOpacity="0.7"
            className="stroke-white/70 stroke-[1.5px] [stroke-linejoin:round] [vector-effect:non-scaling-stroke]"
          />
        ))}
      </g>
    </svg>
  );
}

/* ------------------------------------------------------------------ */
/* Browser toolbar                                                     */
/* ------------------------------------------------------------------ */

function ToolButton({ className, children }: { className: string; children: React.ReactNode }) {
  return (
    <div
      className={
        "flex h-11 shrink-0 items-center justify-center rounded-[7px] border-t border-[#8a8b8d] bg-linear-to-b from-[#77787a] to-[#6c6d6f] " +
        className
      }
    >
      {children}
    </div>
  );
}

function Toolbar() {
  return (
    <div className="flex h-[76px] border-b-2 border-t-2 border-b-black border-t-[#68696b] bg-linear-to-b from-[#4b4c4e] to-[#3c3d3f]">
      <div className="flex w-[841px] items-start pl-4 pt-3.5">
        <ToolButton className="w-[50px]">
          <svg viewBox="0 0 50 44" className="h-11 w-[50px]" fill="none" stroke="#f0f0f0" strokeWidth="3" strokeLinecap="round" strokeLinejoin="round">
            <path d="M30 11L20 22L30 33" />
          </svg>
        </ToolButton>
        <ToolButton className="ml-0.5 w-[50px]">
          <svg viewBox="0 0 50 44" className="h-11 w-[50px]" fill="none" stroke="#98999a" strokeWidth="3" strokeLinecap="round" strokeLinejoin="round">
            <path d="M19.500 11L29.500 22L19.500 33" />
          </svg>
        </ToolButton>
        <ToolButton className="ml-5 w-[74px]">
          <svg viewBox="0 0 74 44" className="h-11 w-[74px]" fill="none" stroke="#ededed" strokeWidth="2">
            <rect x="23" y="11" width="28" height="22" rx="1.500" />
            <path d="M33 11V33" />
            <path d="M26 15H30M26 19H30M26 23H30" stroke="#c4c4c4" />
          </svg>
        </ToolButton>
        <ToolButton className="ml-auto w-[74px]">
          <svg viewBox="0 0 74 44" className="h-11 w-[74px]">
            <circle cx="37" cy="22" r="14.200" fill="#ececec" />
            <path d="M43.500 17.500A8 8 0 1 0 45 23H38.500" fill="none" stroke="#707173" strokeWidth="2.600" />
            <path d="M44.500 22V29.500" stroke="#707173" strokeWidth="2.400" />
          </svg>
        </ToolButton>
      </div>
      <div className="flex w-[1182px] items-start pl-4 pt-3.5">
        <ToolButton className="relative w-full pr-[3px]">
          <svg viewBox="0 0 18 22" className="h-[22px] w-[18px]" fill="none">
            <rect x="1" y="8.500" width="16" height="12" rx="1.500" fill="#ebebeb" />
            <path d="M4.500 9V6a4.500 4.500 0 0 1 9 0v3" stroke="#ebebeb" strokeWidth="2" />
          </svg>
          <span className="ml-2 mt-0.5 font-['Inter',sans-serif] text-[23.700px] leading-none text-white">
            hfboyce.shinyapps.io
          </span>
          <svg viewBox="0 0 28 30" className="absolute right-[10px] top-[5px] h-[30px] w-7" fill="none" stroke="#ebebeb" strokeWidth="2">
            <path d="M15 6A10.500 10.500 0 1 0 24.500 16.500" />
            <path d="M14 1V11.500L20.500 6.200Z" fill="#ebebeb" stroke="none" />
          </svg>
        </ToolButton>
      </div>
      <div className="flex flex-1 items-start justify-end pt-3.5">
        <ToolButton className="w-[74px]">
          <svg viewBox="0 0 74 44" className="h-11 w-[74px]">
            <circle cx="37" cy="22" r="14" fill="#ededed" />
            <path d="M35 14H39V21.500H44L37 30.500L30 21.500H35Z" fill="#6c6d6f" />
          </svg>
        </ToolButton>
        <ToolButton className="ml-4 w-[74px]">
          <svg viewBox="0 0 74 44" className="h-11 w-[74px]" fill="none" stroke="#ededed" strokeWidth="2" strokeLinejoin="round">
            <path d="M33 16.500H28Q27 16.500 27 17.500V34Q27 35 28 35H46Q47 35 47 34V17.500Q47 16.500 46 16.500H41" />
            <path d="M37 25.500V7.500M31.500 13L37 7.500L42.500 13" />
          </svg>
        </ToolButton>
        <ToolButton className="ml-4 w-[74px]">
          <svg viewBox="0 0 74 44" className="h-11 w-[74px]" fill="none" stroke="#ededed" strokeWidth="2">
            <rect x="26" y="17" width="17" height="16.500" rx="1.500" />
            <path d="M32 14V12.500Q32 11 33.500 11H46.500Q48 11 48 12.500V26Q48 27.500 46.500 27.500H45.500" />
          </svg>
        </ToolButton>
      </div>
      <div className="ml-4 mt-[22px] flex h-[50px] w-[50px] shrink-0 items-center justify-center border-l-2 border-t-2 border-[#5f6062] bg-[#2c2d2f] pr-0.5 pt-px">
        <svg viewBox="0 0 22 22" className="h-[22px] w-[22px]" stroke="#a2a3a4" strokeWidth="1.800">
          <path d="M11 0V22M0 11H22" />
        </svg>
      </div>
    </div>
  );
}

/* ------------------------------------------------------------------ */
/* Page                                                                */
/* ------------------------------------------------------------------ */

function Filter({ label, value }: { label: string; value: string }) {
  return (
    <div className="h-[184.500px]">
      <div className="-ml-px h-[72px] whitespace-nowrap text-[35.700px] font-light leading-[50px] text-[#333]">{label}</div>
      <div className="flex h-16 items-center bg-[#222] pl-[29px] pr-5 text-[19.650px] text-white">
        <div className="w-[754px] overflow-hidden whitespace-nowrap pb-0.5 leading-[40px]">{value}</div>
        <svg viewBox="0 0 12 6" className="ml-auto h-1.5 w-3" fill="#fff">
          <path d="M0 0H12L6 6Z" />
        </svg>
      </div>
    </div>
  );
}

const TICKS = ["10,000", "15,000", "20,000", "25,000", "30,000", "35,000", "40,000", "45,000", "50,000"];

function Legend() {
  return (
    <div className="absolute right-[15px] top-[15px] h-[372px] w-[260px] rounded-[7px] bg-white/80 pl-3 pt-[9px] font-['Liberation_Sans',Arial,sans-serif] text-[#555] shadow-[0_0_22px_rgba(0,0,0,0.22)]">
      <div className="whitespace-nowrap text-[22px] font-bold leading-[26px]">
        Boston Crime Density
        <br />
        2015 - 2017
      </div>
      <div className="mt-4 flex">
        <div className="h-[270px] w-[27px] bg-[linear-gradient(to_bottom,#9a7ca4_0%,#9b93b8_15%,#99a5bf_28%,#9ab7c1_42%,#9ec8c1_55%,#a6d2bd_66%,#b4ddb1_76%,#cde4a6_86%,#e8e9a4_94%,#f8eca6_100%)]" />
        <div className="mt-[7px] flex flex-col">
          {TICKS.map((t) => (
            <div key={t} className="flex h-[30px] items-center">
              <span className="ml-px h-[1.500px] w-1.5 bg-[#555]" />
              <span className="ml-[3px] text-[15.750px] leading-none">{t}</span>
            </div>
          ))}
        </div>
      </div>
    </div>
  );
}

export default function App() {
  return (
    <div className="h-[1800px] w-[2880px] overflow-hidden bg-white font-['Noto_Sans_CJK_SC','Noto_Sans',sans-serif]">
      <Toolbar />
      <div className="h-[50px] bg-[#1e1e1e]" />

      <div className="pl-[23px] pr-[22px]">
        <div className="flex h-16 w-[185px] items-center justify-center bg-[#222] pb-0.5 text-[19.600px] text-white">
          <span className="whitespace-nowrap">Close window</span>
        </div>

        <h1 className="-ml-px mt-[25px] h-[74px] whitespace-nowrap text-[43px] font-light leading-[60px] text-[#333]">Boston Crime</h1>

        <nav className="flex h-[77px] items-stretch border-b-2 border-[#0f0f10] bg-[#222] text-[19.700px] text-white">
          <div className="flex w-[204px] items-center pb-[3px] pl-[22px] text-[25px]">
            <span className="whitespace-nowrap">Menu options</span>
          </div>
          <div className="mb-px flex w-[234px] items-center justify-center bg-[#080808] pb-0.5">
            <span className="whitespace-nowrap">Neighhourhood Map</span>
          </div>
          <div className="flex items-center pb-[3px] pl-[22px]">
            <span className="whitespace-nowrap">Hourly incident graph</span>
          </div>
        </nav>

        <div className="mt-8 flex">
          <aside className="ml-[22px] h-[614px] w-[900px] shrink-0 border-2 border-[#e3e3e3] bg-[#f5f5f5] pl-[29px] pr-7 pt-[54px]">
            <Filter
              label="Type of Crime:"
              value="Aggravated Assault, Aircraft, Arson, Assembly Or Gathering Violations, Auto Theft, Auto Theft Recovery, Ballistics"
            />
            <Filter label="Month:" value="January, February, March, April, May, June, July, August, September, October, November, December" />
            <Filter label="Day of The Week:" value="Monday, Tuesday, Wednesday, Thursday, Friday, Saturday, Sunday" />
          </aside>

          <div className="relative ml-[45px] h-[900px] w-[1845px] shrink-0 overflow-hidden">
            <BostonMap />
            <div className="absolute left-[15px] top-[15px] flex h-[78px] w-[39px] flex-col rounded-[6px] bg-white shadow-[0_1px_7px_rgba(0,0,0,0.65)]">
              <div className="flex h-[39px] items-center justify-center border-b-2 border-[#ccc] pt-[3px]">
                <svg viewBox="0 0 16 16" className="h-4 w-4" stroke="#000" strokeWidth="2.800">
                  <path d="M8 0V16M0 8H16" />
                </svg>
              </div>
              <div className="flex flex-1 items-center justify-center pt-px">
                <svg viewBox="0 0 16 16" className="h-4 w-4" stroke="#000" strokeWidth="2.800">
                  <path d="M0 8H16" />
                </svg>
              </div>
            </div>
            <Legend />
            <div className="absolute bottom-0 right-0 flex h-[26px] w-[326px] items-center justify-center whitespace-pre bg-white/70 pt-0.5 font-['Liberation_Sans',Arial,sans-serif] text-[18.200px] leading-none text-[#333]">
              <a className="text-[#2f78a8]">Leaflet</a> | © <a className="text-[#2f78a8]">OpenStreetMap</a> ©{" "}
              <a className="text-[#2f78a8]">CartoDB</a>
            </div>
          </div>
        </div>
      </div>
    </div>
  );
}
